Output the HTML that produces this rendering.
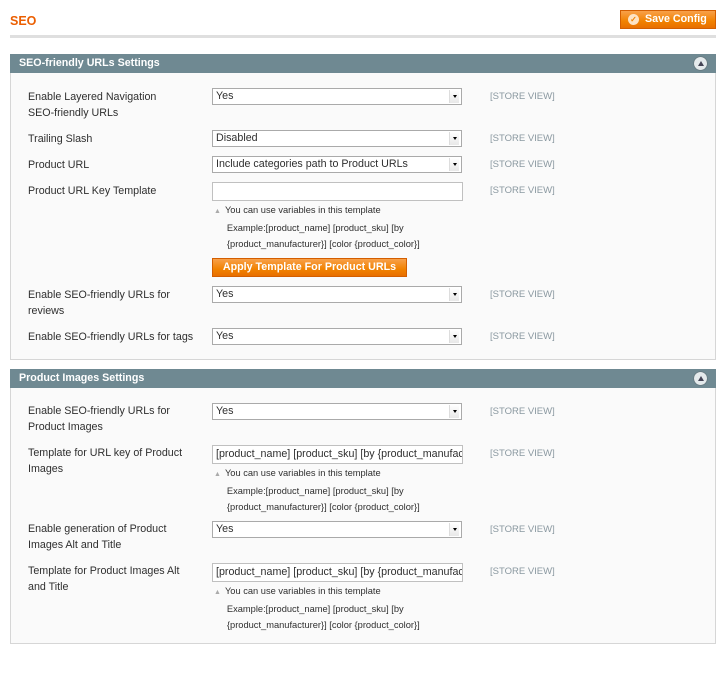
<!DOCTYPE html><html><head><style>
body{margin:0;background:#fff;font-family:"Liberation Sans",sans-serif;font-size:10.7px;color:#2f2f2f;position:relative;width:725px;height:680px;overflow:hidden}
.a{position:absolute}
h1{position:absolute;left:10px;top:14px;margin:0;font-size:12.5px;color:#eb5e00;font-weight:bold}
.rule{left:10px;top:35px;width:706px;height:3px;background:#dfdfdf}
.btn{background:linear-gradient(#f8a04a,#f18200 60%,#e86f00);border:1px solid #d35e00;color:#fff;font-weight:bold;font-size:10.7px;box-sizing:border-box}
.box{left:10px;width:706px;border:1px solid #d6d6d6;background:#fafafa;box-sizing:border-box}
.hd{left:10px;width:706px;height:19px;background:#6f8992;color:#fff;font-weight:bold;font-size:10.7px;line-height:19px;box-sizing:border-box;padding-left:9px}
.tg{position:absolute;right:9px;top:3px;width:13px;height:13px;border-radius:50%;background:#e4eaec;box-shadow:0 0 1px #333}
.tg:after{content:"";position:absolute;left:3.5px;top:3.5px;border-left:3px solid transparent;border-right:3px solid transparent;border-bottom:5px solid #445}
.l{left:28px;width:168px;line-height:16px}
.s{left:212px;width:250px;height:17px;border:1px solid #aaa;background:#fff;box-sizing:border-box;padding-left:3px;line-height:15px;white-space:nowrap;overflow:hidden}
.s:after{content:"";position:absolute;right:2px;top:1px;width:9px;height:13px;border-left:1px solid #ddd;background:linear-gradient(#fff,#e8e8e8)}
.s b{position:absolute;right:4px;top:6px;z-index:1;border-left:2.5px solid transparent;border-right:2.5px solid transparent;border-top:3px solid #000}
.i{left:212px;width:251px;height:19px;border:1px solid #c0c0c0;background:#fff;box-sizing:border-box;padding-left:3px;line-height:17px;white-space:nowrap;overflow:hidden;font-size:10.7px}
.sc{left:490px;color:#8a98a0;font-size:9.5px}
.n{left:214px;line-height:16px;font-size:9.3px}
.n span{color:#aaa;font-size:7px;margin-right:4px}
</style></head><body>
<h1>SEO</h1>
<div class="a btn" style="left:620px;top:10px;width:96px;height:19px;line-height:17px;padding-left:24px">Save Config<span class="a" style="left:7px;top:3px;width:11px;height:11px;border-radius:50%;background:#fde3c4;color:#f18200;font-size:8px;line-height:11px;text-align:center">✓</span></div>
<div class="a rule"></div>

<div class="a box" style="top:54px;height:306px"></div>
<div class="a hd" style="top:54px">SEO-friendly URLs Settings<span class="tg"></span></div>

<div class="a l" style="top:89px;width:140px">Enable Layered Navigation SEO-friendly URLs</div>
<div class="a s" style="top:88px">Yes<b></b></div><div class="a sc" style="top:91px">[STORE VIEW]</div>
<div class="a l" style="top:131px">Trailing Slash</div>
<div class="a s" style="top:130px">Disabled<b></b></div><div class="a sc" style="top:133px">[STORE VIEW]</div>
<div class="a l" style="top:157px">Product URL</div>
<div class="a s" style="top:156px">Include categories path to Product URLs<b></b></div><div class="a sc" style="top:159px">[STORE VIEW]</div>
<div class="a l" style="top:183px">Product URL Key Template</div>
<div class="a i" style="top:182px"></div><div class="a sc" style="top:185px">[STORE VIEW]</div>
<div class="a n" style="top:202px"><span>▲</span>You can use variables in this template<br>&nbsp;&nbsp;&nbsp;&nbsp;&nbsp;Example:[product_name] [product_sku] [by<br>&nbsp;&nbsp;&nbsp;&nbsp;&nbsp;{product_manufacturer}] [color {product_color}]</div>
<div class="a btn" style="left:212px;top:258px;width:195px;height:19px;line-height:17px;text-align:center">Apply Template For Product URLs</div>
<div class="a l" style="top:287px;width:150px">Enable SEO-friendly URLs for reviews</div>
<div class="a s" style="top:286px">Yes<b></b></div><div class="a sc" style="top:289px">[STORE VIEW]</div>
<div class="a l" style="top:329px">Enable SEO-friendly URLs for tags</div>
<div class="a s" style="top:328px">Yes<b></b></div><div class="a sc" style="top:331px">[STORE VIEW]</div>

<div class="a box" style="top:369px;height:275px"></div>
<div class="a hd" style="top:369px">Product Images Settings<span class="tg"></span></div>

<div class="a l" style="top:403px;width:150px">Enable SEO-friendly URLs for Product Images</div>
<div class="a s" style="top:403px">Yes<b></b></div><div class="a sc" style="top:406px">[STORE VIEW]</div>
<div class="a l" style="top:445px;width:160px">Template for URL key of Product Images</div>
<div class="a i" style="top:445px">[product_name] [product_sku] [by {product_manufacturer}]</div><div class="a sc" style="top:448px">[STORE VIEW]</div>
<div class="a n" style="top:465px"><span>▲</span>You can use variables in this template<br>&nbsp;&nbsp;&nbsp;&nbsp;&nbsp;Example:[product_name] [product_sku] [by<br>&nbsp;&nbsp;&nbsp;&nbsp;&nbsp;{product_manufacturer}] [color {product_color}]</div>
<div class="a l" style="top:521px;width:150px">Enable generation of Product Images Alt and Title</div>
<div class="a s" style="top:521px">Yes<b></b></div><div class="a sc" style="top:524px">[STORE VIEW]</div>
<div class="a l" style="top:563px;width:160px">Template for Product Images Alt and Title</div>
<div class="a i" style="top:563px">[product_name] [product_sku] [by {product_manufacturer}]</div><div class="a sc" style="top:566px">[STORE VIEW]</div>
<div class="a n" style="top:583px"><span>▲</span>You can use variables in this template<br>&nbsp;&nbsp;&nbsp;&nbsp;&nbsp;Example:[product_name] [product_sku] [by<br>&nbsp;&nbsp;&nbsp;&nbsp;&nbsp;{product_manufacturer}] [color {product_color}]</div>
</body></html>
